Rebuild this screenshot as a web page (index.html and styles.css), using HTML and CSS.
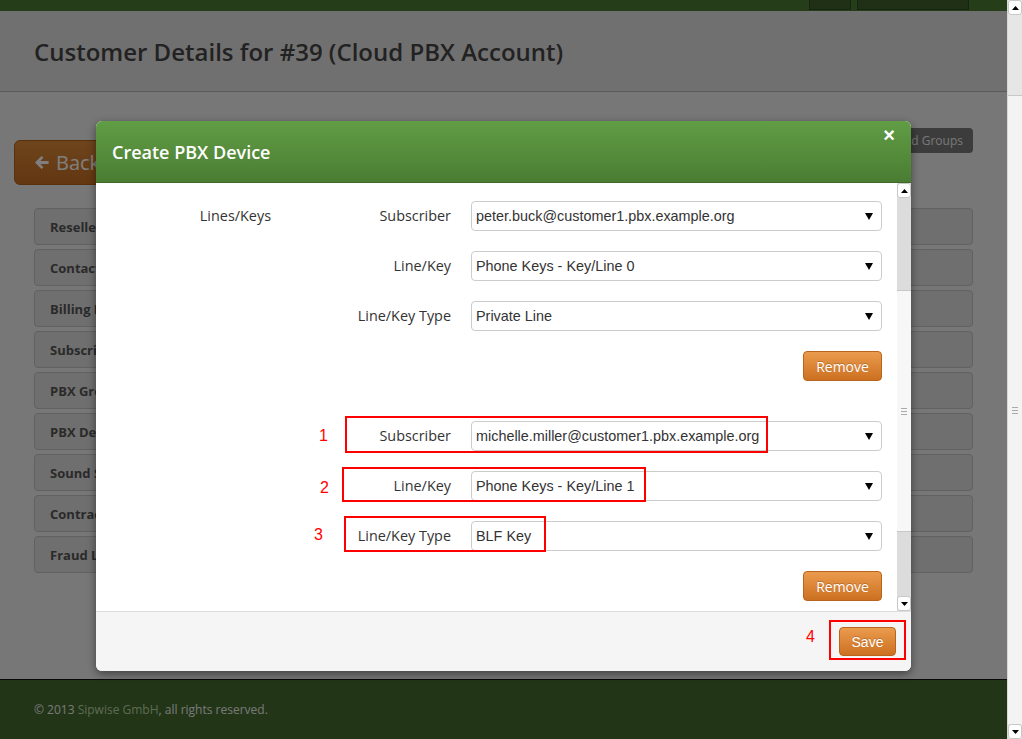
FILE: index.html
```html
<!DOCTYPE html>
<html lang="en">
<head>
    <meta charset="UTF-8">
    <meta name="viewport" content="width=device-width, initial-scale=1.0">
    <title>Customer Details - Sipwise</title>
    <link rel="stylesheet" href="styles.css">
</head>
<body>
    <div class="window">
        <div class="page">
            <div class="navbar">
                <span class="nav-btn nav-btn-small"></span>
                <span class="nav-btn nav-btn-wide"></span>
            </div>
            <div class="page-header">
                <h1>Customer Details for #39 (Cloud PBX Account)</h1>
            </div>
            <main class="content">
                <div class="toolbar">
                    <a class="btn-back" href="#">
                        <svg width="15" height="15" viewBox="0 0 16 16"><path d="M8 2 L2 8 L8 14 M2.5 8 H14.5" fill="none" stroke="currentColor" stroke-width="3"/></svg>
                        Back
                    </a>
                    <a class="btn-expand" href="#">Expand Groups</a>
                </div>
                <div class="panels">
                    <div class="panel">Reseller</div>
                    <div class="panel">Contact Details</div>
                    <div class="panel">Billing Profile</div>
                    <div class="panel">Subscribers</div>
                    <div class="panel">PBX Groups</div>
                    <div class="panel">PBX Devices</div>
                    <div class="panel">Sound Sets</div>
                    <div class="panel">Contract Balance</div>
                    <div class="panel">Fraud Limits</div>
                </div>
            </main>
            <footer class="footer">
                <p>&copy; 2013 <a href="#">Sipwise GmbH</a>, all rights reserved.</p>
            </footer>

            <div class="backdrop"></div>

            <div class="modal">
                <div class="modal-header">
                    <h3>Create PBX Device</h3>
                    <span class="close">&times;</span>
                </div>
                <div class="modal-body">
                    <div class="body-content">
                        <div class="control-group">
                            <div class="control-label">Lines/Keys</div>
                            <div class="controls">
                                <div class="line-group">
                                    <div class="control-group row">
                                        <div class="control-label">Subscriber</div>
                                        <div class="select"><span>peter.buck@customer1.pbx.example.org</span><svg width="8" height="7" viewBox="0 0 8 7"><path d="M0 0 H8 L4 7 Z"/></svg></div>
                                    </div>
                                    <div class="control-group row">
                                        <div class="control-label">Line/Key</div>
                                        <div class="select"><span>Phone Keys - Key/Line 0</span><svg width="8" height="7" viewBox="0 0 8 7"><path d="M0 0 H8 L4 7 Z"/></svg></div>
                                    </div>
                                    <div class="control-group row">
                                        <div class="control-label">Line/Key Type</div>
                                        <div class="select"><span>Private Line</span><svg width="8" height="7" viewBox="0 0 8 7"><path d="M0 0 H8 L4 7 Z"/></svg></div>
                                    </div>
                                    <div class="actions"><button class="btn-orange btn-remove">Remove</button></div>
                                </div>
                                <div class="line-group">
                                    <div class="control-group row">
                                        <div class="control-label">Subscriber</div>
                                        <div class="select"><span>michelle.miller@customer1.pbx.example.org</span><svg width="8" height="7" viewBox="0 0 8 7"><path d="M0 0 H8 L4 7 Z"/></svg></div>
                                    </div>
                                    <div class="control-group row">
                                        <div class="control-label">Line/Key</div>
                                        <div class="select"><span>Phone Keys - Key/Line 1</span><svg width="8" height="7" viewBox="0 0 8 7"><path d="M0 0 H8 L4 7 Z"/></svg></div>
                                    </div>
                                    <div class="control-group row">
                                        <div class="control-label">Line/Key Type</div>
                                        <div class="select"><span>BLF Key</span><svg width="8" height="7" viewBox="0 0 8 7"><path d="M0 0 H8 L4 7 Z"/></svg></div>
                                    </div>
                                    <div class="actions"><button class="btn-orange btn-remove">Remove</button></div>
                                </div>
                            </div>
                        </div>
                    </div>
                    <div class="scroll scroll-inner">
                        <span class="scroll-btn"><svg width="7" height="4" viewBox="0 0 7 4"><path d="M0 4 H7 L3.5 0 Z"/></svg></span>
                        <span class="scroll-track scroll-track-top"></span>
                        <span class="scroll-thumb"><i></i></span>
                        <span class="scroll-track"></span>
                        <span class="scroll-btn"><svg width="7" height="4" viewBox="0 0 7 4"><path d="M0 0 H7 L3.5 4 Z"/></svg></span>
                    </div>
                </div>
                <div class="modal-footer">
                    <button class="btn-orange btn-save">Save</button>
                </div>

                <div class="mark mark-1"></div>
                <div class="mark mark-2"></div>
                <div class="mark mark-3"></div>
                <div class="mark mark-4"></div>
                <span class="mark-num num-1">1</span>
                <span class="mark-num num-2">2</span>
                <span class="mark-num num-3">3</span>
                <span class="mark-num num-4">4</span>
            </div>
        </div>

        <div class="scroll scroll-page">
            <span class="scroll-btn"><svg width="7" height="4" viewBox="0 0 7 4"><path d="M0 4 H7 L3.5 0 Z"/></svg></span>
            <span class="scroll-track scroll-track-page"></span>
            <span class="scroll-thumb"><i></i></span>
            <span class="scroll-btn"><svg width="7" height="4" viewBox="0 0 7 4"><path d="M0 0 H7 L3.5 4 Z"/></svg></span>
        </div>
    </div>
</body>
</html>
```

FILE: styles.css
```css
* {
    margin: 0;
    padding: 0;
    box-sizing: border-box;
}

body {
    font-family: 'Open Sans', sans-serif;
    font-size: 14px;
    color: #333;
    height: 100vh;
    overflow: hidden;
}

a {
    text-decoration: none;
}

.window {
    display: flex;
    height: 100vh;
}

.page {
    flex: 1;
    display: flex;
    flex-direction: column;
    background: #eeeeee;
    position: relative;
}

/* top bar */
.navbar {
    height: 11px;
    background: #4c7a34;
    display: flex;
    justify-content: flex-end;
    gap: 6px;
    padding-right: 38px;
}

.nav-btn {
    height: 10px;
    background: #3e602c;
    border: 1px solid #2c4a1e;
    border-top: none;
}

.nav-btn-small { width: 42px; }
.nav-btn-wide { width: 112px; }

.page-header {
    height: 81px;
    background: #e0e0e0;
    border-bottom: 1px solid #b4b4b4;
    padding: 0 34px;
    display: flex;
    align-items: center;
}

.page-header h1 {
    font-size: 24px;
    font-weight: 600;
    color: #444;
}

.content {
    flex: 1;
    padding: 36px 34px 0;
}

.toolbar {
    display: flex;
    justify-content: space-between;
    align-items: flex-start;
}

.btn-back {
    margin: 12px 0 0 -20px;
    height: 45px;
    width: 110px;
    padding-left: 20px;
    display: flex;
    align-items: center;
    gap: 6px;
    background: linear-gradient(#dc8a3a, #c76e22);
    border: 1px solid #b0601c;
    border-radius: 6px;
    color: #fff;
    font-size: 20px;
}

.btn-expand {
    height: 25px;
    padding: 0 10px;
    display: flex;
    align-items: center;
    background: #787878;
    border-radius: 4px;
    color: #eee;
    font-size: 12px;
}

.panels {
    margin-top: 23px;
}

.panel {
    height: 37px;
    margin-bottom: 4px;
    padding: 0 15px;
    display: flex;
    align-items: center;
    background: #dedede;
    border: 1px solid #c2c2c2;
    border-radius: 4px;
    font-size: 13px;
    font-weight: 700;
    color: #555;
}

.footer {
    height: 60px;
    background: #446a2e;
    border-top: 1px solid #111;
    padding: 0 34px;
    display: flex;
    align-items: center;
    font-size: 12px;
    color: #f0f0f0;
}

.footer a {
    color: #bcd6a8;
}

.backdrop {
    position: absolute;
    inset: 0;
    background: rgba(0, 0, 0, 0.5);
}

/* modal */
.modal {
    position: absolute;
    left: 96px;
    top: 121px;
    width: 815px;
    height: 550px;
    background: #fff;
    border-radius: 6px;
    overflow: hidden;
    box-shadow: 0 3px 9px rgba(0, 0, 0, 0.45);
    display: flex;
    flex-direction: column;
}

.modal-header {
    height: 62px;
    flex-shrink: 0;
    padding: 0 16px;
    display: flex;
    align-items: center;
    background: linear-gradient(#619d45, #4a7d33);
    border-bottom: 1px solid #3d6a29;
    position: relative;
}

.modal-header h3 {
    font-size: 18px;
    font-weight: 600;
    color: #fff;
}

.close {
    position: absolute;
    top: 3px;
    right: 16px;
    font-family: 'Liberation Sans', Arial, sans-serif;
    font-size: 20px;
    font-weight: 700;
    color: #fff;
}

.modal-body {
    height: 428px;
    flex-shrink: 0;
    display: flex;
}

.body-content {
    flex: 1;
    padding: 18px 15px 0;
}

.control-group {
    display: flex;
}

.control-label {
    width: 160px;
    flex-shrink: 0;
    text-align: right;
    line-height: 30px;
    font-size: 14.4px;
    color: #333;
}

.controls {
    flex: 1;
    margin-left: 20px;
}

.row {
    margin-bottom: 20px;
}

.row .control-label {
    margin-right: 20px;
}

.line-group {
    margin-bottom: 40px;
}

.select {
    flex: 1;
    height: 30px;
    padding: 0 8px 0 4px;
    display: flex;
    align-items: center;
    justify-content: space-between;
    border: 1px solid #ccc;
    border-radius: 4px;
    font-family: 'Liberation Sans', Arial, sans-serif;
    font-size: 14.4px;
    color: #333;
}

.actions {
    display: flex;
    justify-content: flex-end;
}

.btn-orange {
    background: linear-gradient(#eb9b4e, #cc7021);
    border: 1px solid #b8641d;
    border-radius: 4px;
    color: #fff;
    font-size: 14px;
    text-shadow: 0 -1px 0 rgba(0, 0, 0, 0.2);
    cursor: pointer;
}

.btn-remove {
    width: 79px;
    height: 30px;
    font-family: 'Open Sans', sans-serif;
}

.btn-save {
    width: 57px;
    height: 29px;
    font-family: 'Liberation Sans', Arial, sans-serif;
}

.modal-footer {
    flex: 1;
    padding: 15px;
    display: flex;
    justify-content: flex-end;
    align-items: flex-start;
    background: #f5f5f5;
    border-top: 1px solid #ddd;
}

/* scrollbars */
.scroll {
    width: 14px;
    display: flex;
    flex-direction: column;
    background: #dcdcdc;
}

.scroll-page {
    width: 15px;
    background: #e6e6e6;
    border-left: 1px solid #d8d8d8;
}

.scroll-btn {
    height: 15px;
    flex-shrink: 0;
    display: flex;
    align-items: center;
    justify-content: center;
    background: #fff;
    border: 1px solid #c8c8c8;
    border-radius: 3px;
}

.scroll-track {
    flex: 1;
}

.scroll-track-top {
    flex: 0 0 92px;
}

.scroll-track-page {
    flex: 0 0 80px;
}

.scroll-thumb {
    display: flex;
    align-items: center;
    justify-content: center;
    background: #f7f7f7;
    border-top: 1px solid #c8c8c8;
    border-bottom: 1px solid #c8c8c8;
}

.scroll-inner .scroll-thumb {
    height: 242px;
    flex-shrink: 0;
}

.scroll-page .scroll-thumb {
    flex: 1;
    background: #f3f3f3;
    border-bottom: none;
}

.scroll-thumb i {
    width: 6px;
    height: 7px;
    border-top: 1px solid #aaa;
    border-bottom: 1px solid #aaa;
    background: linear-gradient(transparent 2px, #aaa 2px, #aaa 3px, transparent 3px);
}

/* annotations */
.mark {
    position: absolute;
    border: 2px solid #f00;
}

.mark-1 { left: 249px; top: 295px; width: 423px; height: 37px; }
.mark-2 { left: 246px; top: 346px; width: 304px; height: 35px; }
.mark-3 { left: 248px; top: 395px; width: 202px; height: 36px; }
.mark-4 { left: 733px; top: 499px; width: 77px; height: 40px; }

.mark-num {
    position: absolute;
    font-family: 'Liberation Sans', Arial, sans-serif;
    font-size: 16px;
    color: #f00;
    line-height: 18px;
}

.num-1 { left: 223px; top: 306px; }
.num-2 { left: 224px; top: 358px; }
.num-3 { left: 218px; top: 405px; }
.num-4 { left: 710px; top: 507px; }
```
